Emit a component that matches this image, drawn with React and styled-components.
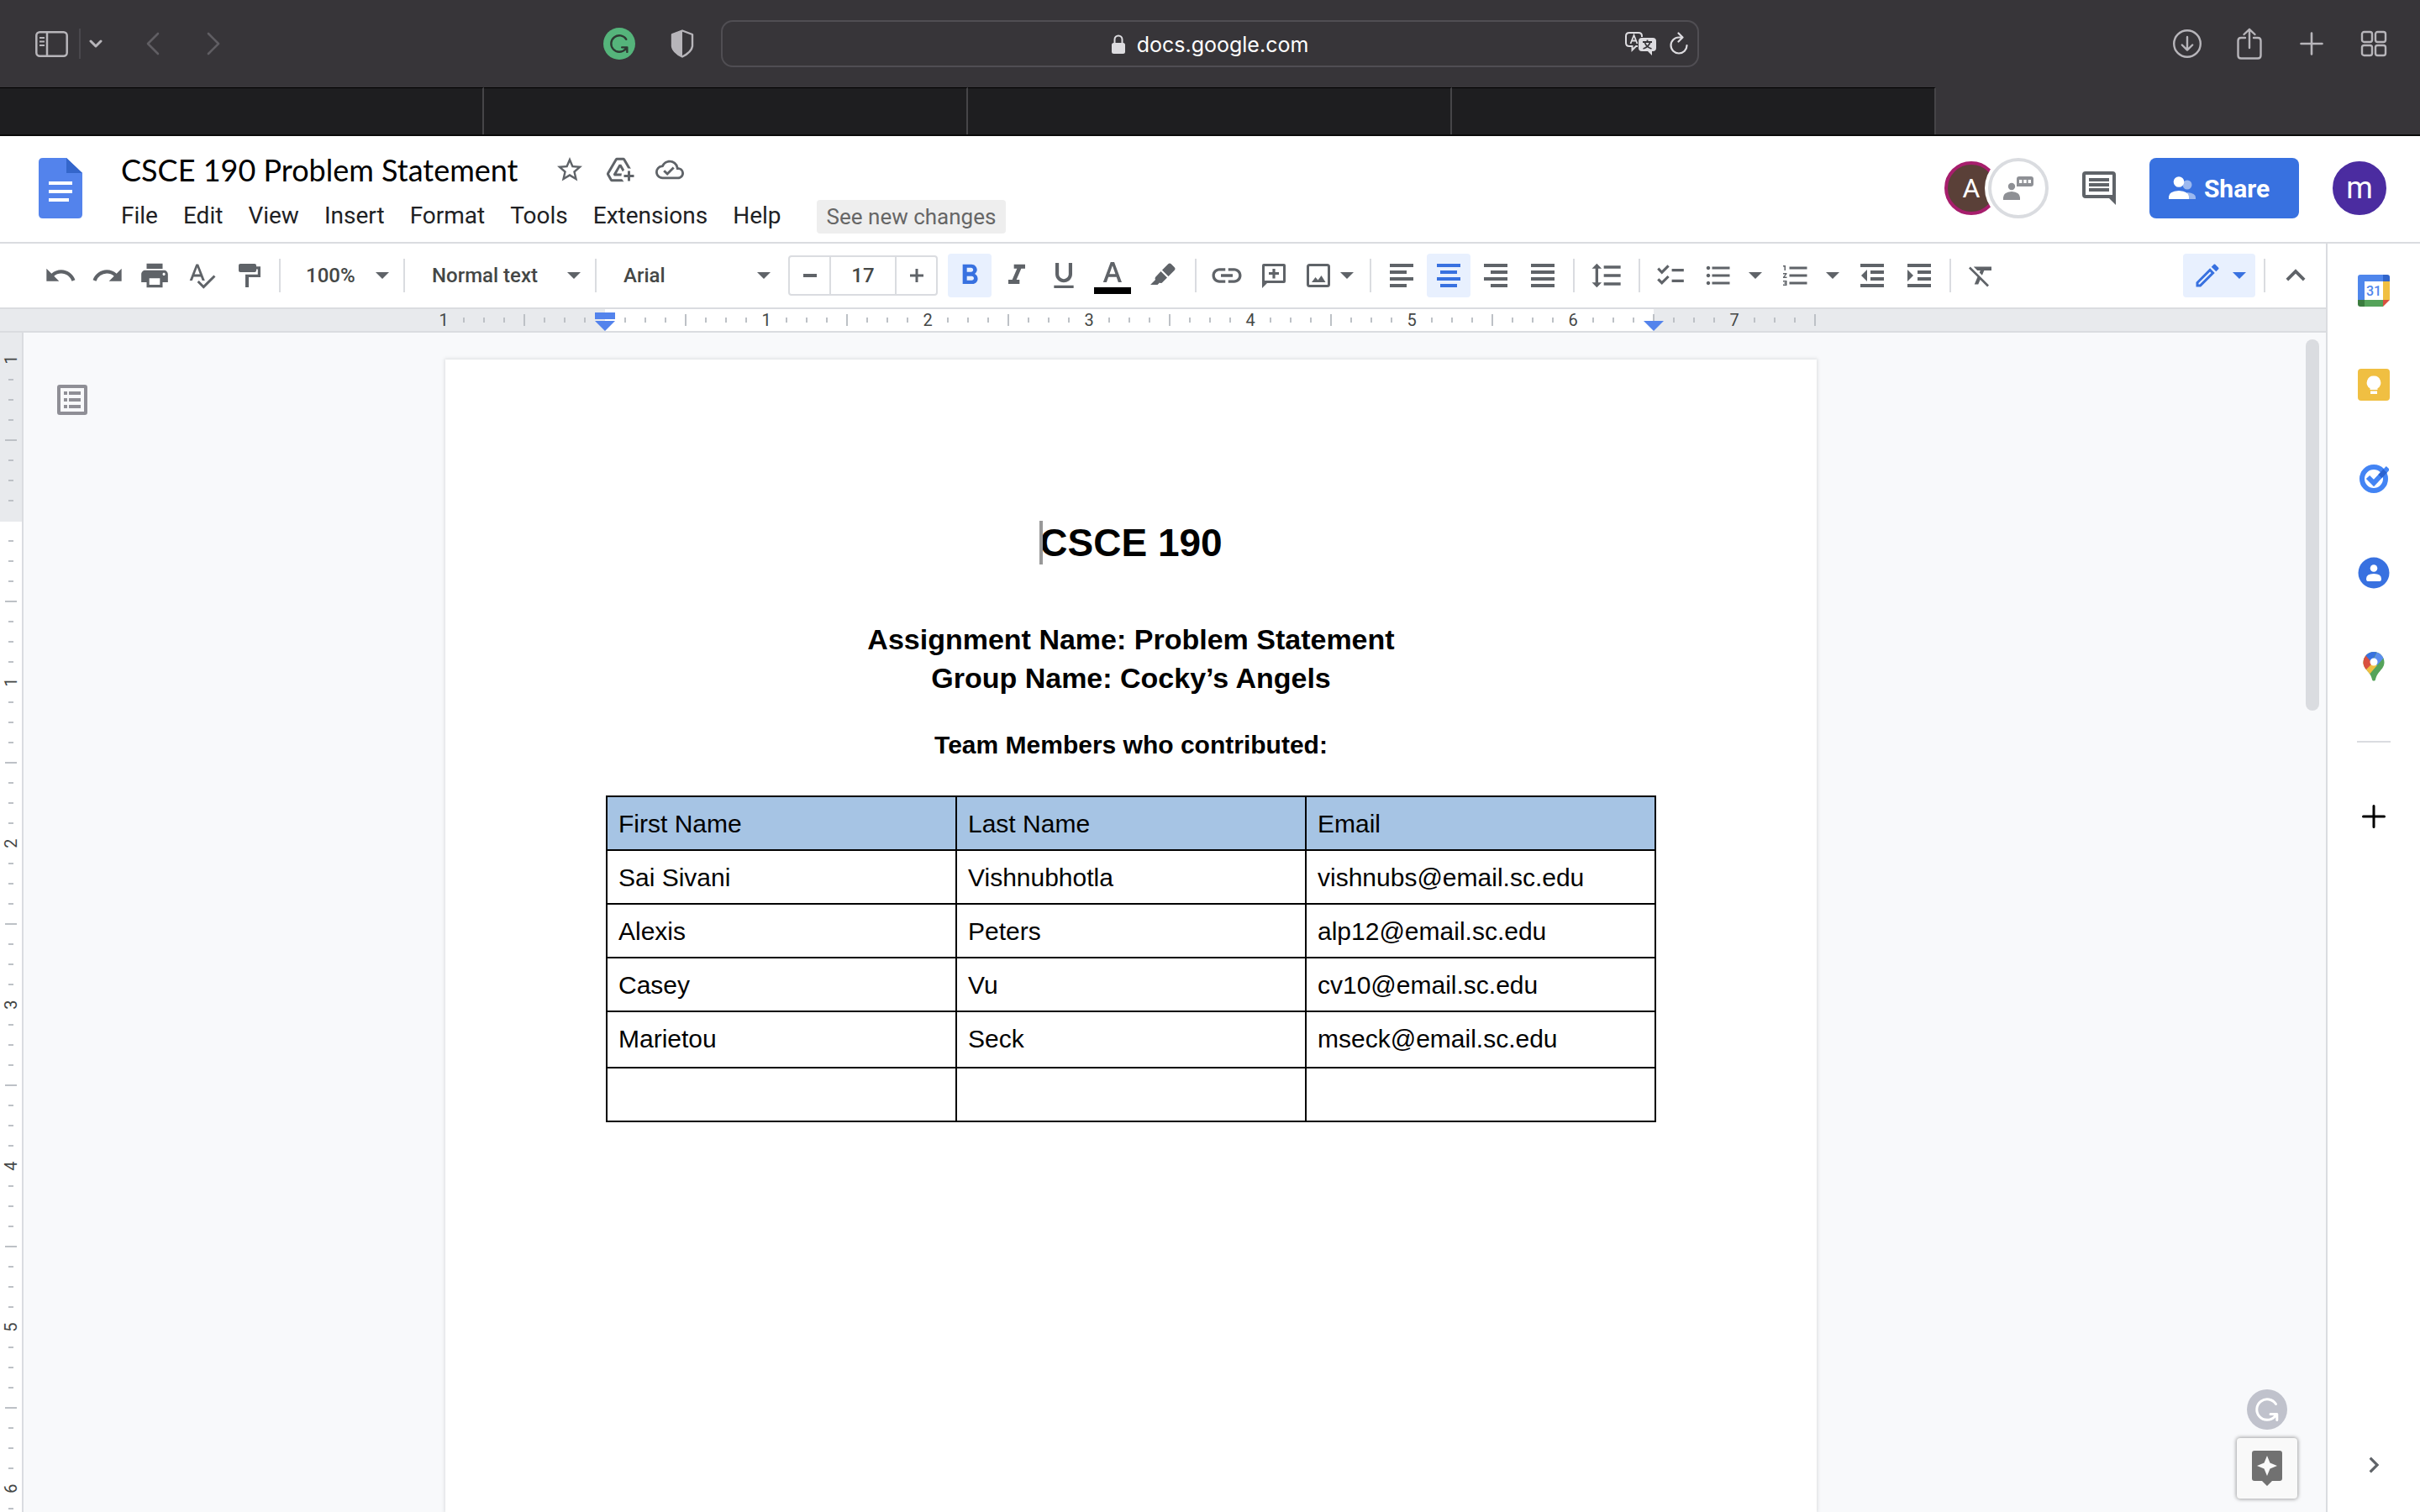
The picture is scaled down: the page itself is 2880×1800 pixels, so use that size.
import React from "react";
import styled, { createGlobalStyle, css } from "styled-components";
import {
  MdUndo, MdRedo, MdPrint, MdSpellcheck, MdFormatBold, MdFormatItalic,
  MdFormatUnderlined, MdLink, MdFormatLineSpacing, MdChecklist,
  MdFormatListBulleted, MdFormatListNumbered, MdFormatClear, MdOutlineEdit,
  MdKeyboardArrowUp, MdStarBorder, MdAddToDrive, MdOutlineCloudDone,
  MdChevronRight,
} from "react-icons/md";

const ui = '"Roboto", "Liberation Sans", sans-serif';
const doc = '"Liberation Sans", Arial, sans-serif';
const line = "#dadce0";
const ink = "#5f6368";

const GlobalStyle = createGlobalStyle`
  *, *::before, *::after { box-sizing: border-box; }
  body { margin: 0; background: #fff; font-family: ${ui}; overflow: hidden; }
  button, input, select { font: inherit; color: inherit; margin: 0; }
  button { padding: 0; border: 0; background: none; }
  svg { display: block; flex: none; }
`;

const Screen = styled.div`
  height: 100vh;
  display: flex;
  flex-direction: column;
`;

/* ---------- browser chrome ---------- */

const BrowserBar = styled.div`
  flex: none;
  height: 104px;
  padding: 0 36px;
  background: #373539;
  color: #b7b5ba;
  display: grid;
  grid-template-columns: 1fr minmax(0, 1164px) 1fr;
  align-items: start;
`;

const BarGroup = styled.div`
  height: 104px;
  display: flex;
  align-items: center;
  gap: ${(p) => p.$gap}px;
  padding: 0 ${(p) => p.$end || 0}px 0 ${(p) => p.$start || 0}px;
`;

const BarSide = styled.div`
  display: flex;
  justify-content: ${(p) => (p.$end ? "flex-end" : "space-between")};
`;

const BarButton = styled.button`
  height: 40px;
  width: ${(p) => p.$w || 38}px;
  display: flex;
  align-items: center;
  justify-content: center;
  color: ${(p) => (p.$dim ? "#605e63" : "inherit")};
`;

const BarRule = styled.span`
  width: 2px;
  height: 36px;
  background: #4a484d;
`;

const AddressBox = styled.div`
  height: 56px;
  margin-top: 24px;
  padding: 0 10px;
  border: 2px solid #504e53;
  border-radius: 14px;
  display: grid;
  grid-template-columns: 1fr auto 1fr;
  align-items: center;
  color: #fff;
`;

const Address = styled.a`
  grid-column: 2;
  display: flex;
  align-items: center;
  gap: 14px;
  padding-top: 2px;
  font: 400 25px/32px "Inter", ${ui};
  color: #fff;
  text-decoration: none;
`;

const AddressTools = styled.div`
  display: flex;
  justify-content: flex-end;
  gap: 14px;
  color: #dddce0;
`;

const TabStrip = styled.div`
  flex: none;
  display: flex;
  height: 58px;
  border-bottom: 2px solid #0a0a0a;
`;

const BrowserTab = styled.button`
  flex: 1;
  border-right: 2px solid #464548;
  border-top: 1px solid #000;
  background: #1e1e20;
  ${(p) => p.$active && css`
    background: #373539;
    border-color: #373539;
  `}
`;

/* ---------- document header ---------- */

const Header = styled.header`
  flex: none;
  height: 128px;
  padding: 0 40px 2px 46px;
  border-bottom: 2px solid ${line};
  display: flex;
  align-items: center;
`;

const TitleBlock = styled.div`
  margin-left: 32px;
  display: flex;
  flex-direction: column;
  gap: 12px;
  padding-top: 8px;
  flex: 1;
`;

const TitleRow = styled.div`
  display: flex;
  align-items: center;
  gap: 24px;
  height: 48px;
`;

const TitleInput = styled.input`
  width: 506px;
  height: 48px;
  padding: 0 0 0 14px;
  border: 0;
  background: none;
  outline: none;
  font: 400 36px/48px "Lato", ${ui};
  color: #000;
`;

const PlainButton = styled.button`
  display: flex;
  color: ${ink};
`;

const MenuRow = styled.nav`
  display: flex;
  gap: 2px;
  height: 40px;
`;

const MenuItem = styled.button`
  padding: 0 14px 2px;
  font-size: 28px;
  line-height: 38px;
  color: #202124;
`;

const ChangesButton = styled.button`
  margin-left: 26px;
  padding: 0 12px;
  border-radius: 4px;
  background: #eee;
  color: #666;
  font-size: 26px;
  line-height: 40px;
`;

const HeaderActions = styled.div`
  display: flex;
  align-items: center;
  gap: 40px;
`;

const People = styled.div`
  display: flex;
  align-items: center;
`;

const Avatar = styled.button`
  width: 64px;
  height: 64px;
  border-radius: 50%;
  border: 4px solid ${(p) => p.$ring};
  background: ${(p) => p.$fill};
  color: #fff;
  font-size: ${(p) => p.$size}px;
  line-height: 40px;
`;

const ChatButton = styled.button`
  width: 72px;
  height: 72px;
  margin-left: -12px;
  border-radius: 50%;
  border: 4px solid ${line};
  background: #fff;
  box-shadow: 0 0 0 4px #fff;
  display: grid;
  place-items: center;
`;

const ShareButton = styled.button`
  height: 72px;
  width: 178px;
  padding-right: 12px;
  border-radius: 8px;
  background: #3871e0;
  color: #fff;
  font-size: 30px;
  font-weight: 700;
  display: flex;
  align-items: center;
  justify-content: center;
  gap: 10px;
`;

/* ---------- workspace ---------- */

const Workspace = styled.div`
  flex: 1;
  min-height: 0;
  display: flex;
`;

const Editor = styled.main`
  flex: 1;
  min-width: 0;
  display: flex;
  flex-direction: column;
`;

const Toolbar = styled.div`
  flex: none;
  height: 78px;
  padding: 0 10px 0 46px;
  border-bottom: 2px solid ${line};
  display: flex;
  align-items: center;
  gap: 4px;
  color: ${ink};
`;

const ToolButton = styled.button`
  flex: none;
  width: ${(p) => p.$w || 52}px;
  height: 52px;
  border-radius: 4px;
  display: flex;
  align-items: center;
  justify-content: center;
  gap: ${(p) => p.$gap || 0}px;
  ${(p) => p.$on && css`
    background: #e8f0fe;
    color: #3871e0;
  `}
`;

const Divider = styled.span`
  flex: none;
  width: 2px;
  height: 40px;
  margin: 0 6px;
  background: ${line};
`;

const Spacer = styled.span`
  flex: 1;
`;

const Picker = styled.label`
  flex: none;
  position: relative;
  width: ${(p) => p.$w}px;
  height: 52px;
  display: flex;
  align-items: center;

  select {
    appearance: none;
    width: 100%;
    height: 52px;
    padding: 0 36px 0 ${(p) => p.$pad}px;
    border: 0;
    background: none;
    font-size: 24px;
    font-weight: 500;
    color: #444746;
  }

  svg {
    position: absolute;
    right: 7px;
    pointer-events: none;
  }
`;

const SizeBox = styled.div`
  flex: none;
  display: flex;
  width: 178px;
  height: 48px;
  margin: 0 8px 0 10px;
  border: 2px solid ${line};
  border-radius: 4px;

  button {
    width: 47px;
    display: grid;
    place-items: center;
  }

  input {
    flex: 1;
    min-width: 0;
    border: solid ${line};
    border-width: 0 2px;
    text-align: center;
    font-size: 24px;
    font-weight: 500;
    color: #444746;
    outline: none;
  }
`;

const RulerBar = styled.div`
  flex: none;
  height: 28px;
  padding: 0 108px 0 28px;
  border-bottom: 2px solid ${line};
  background: #e8eaed;
  display: flex;
  justify-content: center;
`;

const RulerStrip = styled.div`
  position: relative;
  flex: none;
  display: flex;
  background: linear-gradient(90deg, #e8eaed 204px, #fff 204px, #fff 1452px, #e8eaed 1452px);
`;

const SideRuler = styled.div`
  flex: none;
  width: 28px;
  padding-top: 20px;
  border-right: 2px solid ${line};
  background: linear-gradient(#e8eaed 225px, #fff 225px);
  overflow: hidden;
`;

const SideRulerStrip = styled.div`
  display: flex;
  flex-direction: column;
`;

const Cell = styled.span`
  flex: none;
  width: ${(p) => (p.$side ? 26 : 24)}px;
  height: ${(p) => (p.$side ? 24 : 26)}px;
  display: grid;
  place-items: center;
  font-size: 20px;
  line-height: 24px;
  color: #444746;
`;

const Mark = styled.i`
  background: #bdc1c6;
  width: ${(p) => (p.$side ? p.$len : 2)}px;
  height: ${(p) => (p.$side ? 2 : p.$len)}px;
`;

const Turned = styled.span`
  transform: rotate(-90deg);
`;

const Indent = styled.svg`
  position: absolute;
  top: 4px;
  left: ${(p) => p.$at}px;
`;

const Canvas = styled.div`
  flex: 1;
  min-height: 0;
  display: flex;
  background: #f8f9fb;
  position: relative;
`;

const OutlineColumn = styled.div`
  flex: none;
  width: 116px;
  padding: 62px 0 0 40px;
`;

const PageArea = styled.div`
  flex: 1;
  min-width: 0;
  display: flex;
  justify-content: center;
  padding: 32px 196px 0 0;
  overflow: hidden;
`;

const Page = styled.article`
  flex: none;
  width: 1632px;
  padding: 192px;
  background: #fff;
  box-shadow: 0 0 4px 1px rgba(60, 64, 67, 0.15);
  font-family: ${doc};
  color: #000;
  text-align: center;
`;

const DocTitle = styled.h1`
  margin: 0 0 66px;
  font-size: 46px;
  line-height: 52px;
`;

const Caret = styled.span`
  position: absolute;
  width: 4px;
  height: 52px;
  background: #999;
`;

const DocLine = styled.h2`
  margin: 0;
  font-size: 34px;
  line-height: 46px;
`;

const DocCaption = styled.h3`
  margin: 37px 0 40px;
  font-size: 30px;
  line-height: 40px;
`;

const Members = styled.table`
  width: calc(100% + 2px);
  margin-left: -1px;
  table-layout: fixed;
  border-collapse: collapse;
  font-size: 30px;
  line-height: 40px;
  text-align: left;

  th, td {
    height: 64px;
    padding: 12px 12px 10px 13px;
    border: 2px solid #000;
    font-weight: 400;
    vertical-align: top;
  }

  th { background: #a6c4e4; }
`;

const MemberRow = styled.tr`
  height: ${(p) => (p.$last ? 67 : 64)}px;
`;

const ScrollTrack = styled.div`
  flex: none;
  width: 24px;
  padding-top: 8px;
`;

const ScrollThumb = styled.div`
  width: 16px;
  height: 442px;
  border-radius: 8px;
  background: ${line};
`;

const Floating = styled.div`
  position: absolute;
  right: 34px;
  bottom: 16px;
  display: flex;
  flex-direction: column;
  align-items: center;
  gap: 10px;
`;

const ExploreButton = styled.button`
  width: 72px;
  height: 72px;
  border-radius: 4px;
  background: #f9f9f9;
  box-shadow: 0 0 4px 1px rgba(0, 0, 0, 0.35);
  display: grid;
  place-items: center;
`;

const SidePanel = styled.aside`
  flex: none;
  width: 112px;
  padding: 16px 0;
  border-left: 2px solid ${line};
  background: #fff;
  display: flex;
  flex-direction: column;
  align-items: center;
  gap: 32px;
`;

const PanelButton = styled.button`
  width: 80px;
  height: 80px;
  display: grid;
  place-items: center;
  color: ${(p) => p.$color || ink};
`;

const PanelRule = styled.span`
  width: 40px;
  height: 2px;
  margin: 16px 0;
  background: ${line};
`;

/* ---------- drawings ---------- */

const Drop = () => (
  <svg width="16" height="8" viewBox="0 0 16 8"><path fill="currentColor" d="M0 0h16L8 8z" /></svg>
);

const Solid = ({ d }) => (
  <svg width="16" height="16" viewBox="0 0 16 16"><path fill="currentColor" d={d} /></svg>
);

const Lines = ({ rows }) => (
  <svg width="28" height="28" viewBox="0 0 28 28" fill="currentColor">
    {rows.map(([x, w], i) => <rect key={i} x={x} y={i * 8} width={w} height="4" />)}
  </svg>
);

const IndentIcon = ({ d }) => (
  <svg width="28" height="28" viewBox="0 0 28 28" fill="currentColor">
    <path d="M0 0h28v4H0zM12 8h16v4H12zM12 16h16v4H12zM0 24h28v4H0z" />
    <path d={d} />
  </svg>
);

const PaintRoller = () => (
  <svg width="36" height="36" viewBox="0 0 18 18" fill="currentColor">
    <rect x="3" y="2" width="10.5" height="5" rx="1" />
    <path d="M13 3.6h3V10H9v6H7V8.4h7.4V5.2H13z" />
  </svg>
);

const TextColor = () => (
  <svg width="44" height="44" viewBox="0 0 44 44">
    <path fill="#5f6368" transform="translate(1.5 1) scale(1.7)" d="M5.49 17h2.42l1.27-3.58h5.65L16.09 17h2.42L13.25 3h-2.5L5.49 17zm4.42-5.61 2.03-5.79h.12l2.03 5.79H9.91z" />
    <path fill="#000" d="M0 36h44v8H0z" />
  </svg>
);

const Highlighter = () => (
  <svg width="32" height="36" viewBox="0 0 32 36" fill="currentColor">
    <path d="M22 4.500q2-2 4 0l3.500 3.500q2 2 0 4l-7 7-7.500-7.500zM13.500 13l7.500 7.500-6 6q-1.500 1-3 0l-2.500 2.500H1l6-6q-1-1.500 0-3z" />
  </svg>
);

const AddComment = () => (
  <svg width="36" height="36" viewBox="0 0 18 18" fill="currentColor">
    <path d="M3 2h12q1 0 1 1v9.500q0 1-1 1H5L2 16.500V3q0-1 1-1zm.5 1.500V12h11V3.500zM8.200 5h1.600v2H12v1.500H9.800v2.200H8.200V8.500H6V7h2.200z" fillRule="evenodd" />
  </svg>
);

const ImageIcon = () => (
  <svg width="28" height="28" viewBox="0 0 28 28">
    <rect x="1.500" y="1.500" width="25" height="25" rx="2" fill="none" stroke="currentColor" strokeWidth="3" />
    <path fill="currentColor" d="M6 22l4.500-6 3 3.600L17.500 14l5 8z" />
  </svg>
);

const DocsLogo = () => (
  <svg width="52" height="72" viewBox="0 0 52 72">
    <path fill="#5383ec" d="M5 0h28l19 18v49q0 5-5 5H5q-5 0-5-5V5q0-5 5-5z" />
    <path fill="#3466cb" d="M33 0l19 18H33z" />
    <path fill="#fff" d="M12 28h28v4H12zM12 38h28v4H12zM12 48h24v4H12z" />
  </svg>
);

const GrammarlyMark = ({ size, fill, stroke }) => (
  <svg width={size} height={size} viewBox="0 0 48 48">
    <circle cx="24" cy="24" r="24" fill={fill} />
    <path fill="none" stroke={stroke} strokeWidth="3" strokeLinecap="round" strokeLinejoin="round" d="M34.500 17.500A12.300 12.300 0 1 0 33 32.500M28 29.500h7.800v7M35 30l-2.500 3" />
  </svg>
);

const SidebarIcon = () => (
  <svg width="39" height="31" viewBox="0 0 39 31" fill="none" stroke="currentColor" strokeWidth="2.500">
    <rect x="1.300" y="1.300" width="36.400" height="28.400" rx="4" />
    <path d="M14 1v29" />
    <path strokeWidth="1.800" d="M5 8h6M5 12.500h6M5 17h6" />
  </svg>
);

const ShieldIcon = () => (
  <svg width="28" height="34" viewBox="0 0 28 34">
    <path fill="none" stroke="currentColor" strokeWidth="2.400" strokeLinejoin="round" d="M14 1.500l12 4.500v14q-1 7-12 12.500Q3 27 2 20V6z" />
    <path fill="currentColor" d="M14 1v32Q2 27 1 20V6z" />
  </svg>
);

const LockIcon = () => (
  <svg width="16" height="24" viewBox="0 0 16 24">
    <rect y="10" width="16" height="13" rx="2.500" fill="#dddce0" />
    <path fill="none" stroke="#dddce0" strokeWidth="2" d="M3.500 11V6a4.500 4.500 0 0 1 9 0v5" />
  </svg>
);

const TranslateIcon = () => (
  <svg width="38" height="28" viewBox="0 0 38 28">
    <path fill="none" stroke="currentColor" strokeWidth="2" d="M15 17h-2l-4.500 4.500V17H5q-4 0-4-4V5q0-4 4-4h11q4 0 4 4v1" />
    <path fill="none" stroke="currentColor" strokeWidth="1.800" d="M6.500 14l4-10 4 10M8 10.500h5" />
    <path fill="currentColor" d="M20 7h13q4 0 4 4v8q0 4-4 4h-1v5l-5-5h-7q-4 0-4-4v-8q0-4 4-4z" />
    <path fill="none" stroke="#373539" strokeWidth="1.800" d="M21 12h11M26.500 9.500V12M30 12q-2 6-8.500 8M23.500 13q2 5 8 7" />
  </svg>
);

const ReloadIcon = () => (
  <svg width="24" height="28" viewBox="0 0 24 28" fill="none" stroke="currentColor" strokeWidth="2.200" strokeLinecap="round" strokeLinejoin="round">
    <path d="M16 6.500H12A9.500 9.500 0 1 0 21.500 16M11.500 1.500l5 5-5 5" />
  </svg>
);

const DownloadIcon = () => (
  <svg width="36" height="36" viewBox="0 0 36 36" fill="none" stroke="currentColor" strokeWidth="2.400" strokeLinecap="round" strokeLinejoin="round">
    <circle cx="18" cy="18" r="15.800" />
    <path d="M18 10v15.500M11.800 19.500l6.200 6.200 6.200-6.200" />
  </svg>
);

const ShareUpIcon = () => (
  <svg width="30" height="38" viewBox="0 0 30 38" fill="none" stroke="currentColor" strokeWidth="2.400" strokeLinecap="round" strokeLinejoin="round">
    <path d="M10 12H5q-3.500 0-3.500 3.500v17.500q0 3.500 3.500 3.500h20q3.500 0 3.500-3.500V15.500q0-3.500-3.500-3.500h-5M15 24V2M8.500 8L15 1.800 21.500 8" />
  </svg>
);

const GridIcon = () => (
  <svg width="32" height="32" viewBox="0 0 32 32" fill="none" stroke="currentColor" strokeWidth="2.400">
    {[[2, 2], [18, 2], [2, 18], [18, 18]].map(([x, y]) => (
      <rect key={`${x}-${y}`} x={x} y={y} width="12" height="12" rx="2.500" />
    ))}
  </svg>
);

const Stroke = ({ w, h, d, sw }) => (
  <svg width={w} height={h} viewBox={`0 0 ${w} ${h}`} fill="none" stroke="currentColor" strokeWidth={sw} strokeLinecap="round" strokeLinejoin="round">
    <path d={d} />
  </svg>
);

const ChatPeople = () => (
  <svg width="36" height="28" viewBox="0 0 36 28" fill="#8e9095">
    <path d="M19 0h14q3 0 3 3v6q0 3-3 3H16V3q0-3 3-3z" />
    <path fill="#fff" d="M19 4h3.400v4H19zM24.300 4h3.400v4h-3.400zM29.600 4H33v4h-3.400z" />
    <circle cx="10" cy="12" r="4.200" />
    <path d="M0 28v-3q0-6 10-7 10 1 10 7v3z" />
  </svg>
);

const CommentIcon = () => (
  <svg width="40" height="40" viewBox="0 0 40 40" fill={ink}>
    <path fillRule="evenodd" d="M4 0h32q4 0 4 4v36l-8-8H4q-4 0-4-4V4q0-4 4-4zm0 4v24h32V4z" />
    <path d="M8 8h24v4H8zM8 14h24v4H8zM8 20h24v4H8z" />
  </svg>
);

const SharePeople = () => (
  <svg width="32" height="28" viewBox="0 0 32 28" fill="#fff">
    <g opacity="0.5">
      <circle cx="22" cy="10" r="5.500" />
      <path d="M22 19q10 1 10 6v2H22z" />
    </g>
    <circle cx="12" cy="6.500" r="6.300" />
    <path d="M0 27v-3q0-6 12-7 12 1 12 7v3z" />
  </svg>
);

const OutlineIcon = () => (
  <svg width="36" height="36" viewBox="0 0 36 36" fill="#8f8f96">
    <path fillRule="evenodd" d="M3 0h30q3 0 3 3v30q0 3-3 3H3q-3 0-3-3V3q0-3 3-3zm1 4v28h28V4z" />
    <path d="M8 8h4v4H8zM14 8h14v4H14zM8 16h4v4H8zM14 16h14v4H14zM8 24h4v4H8zM14 24h14v4H14z" />
  </svg>
);

const ExploreIcon = () => (
  <svg width="36" height="42" viewBox="0 0 36 42">
    <path fill="#717171" d="M3 0h30q3 0 3 3v30q0 3-3 3h-9l-6 6-6-6H3q-3 0-3-3V3q0-3 3-3z" />
    <path fill="#f9f9f9" d="M18 6l3.500 8.500L30 18l-8.500 3.500L18 30l-3.500-8.500L6 18l8.500-3.500z" />
  </svg>
);

const CalendarIcon = () => (
  <svg width="38" height="38" viewBox="0 0 38 38">
    <path fill="#4f86ec" d="M3 0h27v8H8v22H0V3q0-3 3-3z" />
    <path fill="#3165cb" d="M30 0h5q3 0 3 3v5h-8z" />
    <path fill="#f0bf42" d="M30 8h8v22h-8z" />
    <path fill="#55a35a" d="M8 30h22v8H8z" />
    <path fill="#3b7c3f" d="M0 30h8v8H3q-3 0-3-3z" />
    <path fill="#d9503f" d="M30 30h8l-8 8z" />
    <path fill="#fff" d="M8 8h22v22H8z" />
    <text x="19" y="25" textAnchor="middle" fontFamily="Roboto, sans-serif" fontSize="16" fontWeight="500" fill="#4f86ec">31</text>
  </svg>
);

const KeepIcon = () => (
  <svg width="38" height="38" viewBox="0 0 38 38">
    <rect width="38" height="38" rx="4" fill="#f0bf42" />
    <path fill="#fff" d="M19 8.500a8 8 0 0 1 4.500 14.800V25h-9v-1.700A8 8 0 0 1 19 8.500zM15 26.500h8V30h-8z" />
  </svg>
);

const TasksIcon = () => (
  <svg width="36" height="36" viewBox="0 0 36 36" fill="none">
    <circle cx="18" cy="18" r="14" stroke="#4384f4" strokeWidth="6" />
    <path stroke="#4384f4" strokeWidth="6" d="M11 16l7 7L35 5" />
    <path stroke="#2b62cf" strokeWidth="6" d="M25.500 15l6-6.400" />
  </svg>
);

const ContactsIcon = () => (
  <svg width="38" height="38" viewBox="0 0 38 38">
    <circle cx="19" cy="19" r="18.500" fill="#3871e0" />
    <circle cx="19" cy="13.500" r="4.300" fill="#fff" />
    <path fill="#fff" d="M10 26q0-6 9-6t9 6q0 3-2 3H12q-2 0-2-3z" />
  </svg>
);

const MapsIcon = () => (
  <svg width="26" height="36" viewBox="0 0 26 36">
    <defs>
      <clipPath id="pin">
        <path d="M13 0a12.500 12.500 0 0 1 12.500 12.500c0 6-4 8.500-7.500 13.500-2 3-2.500 5-3 7-.4 2-3.600 2-4 0-.5-2-1-4-3-7C4.500 21 .5 18.500.5 12.500A12.500 12.500 0 0 1 13 0z" />
      </clipPath>
    </defs>
    <g clipPath="url(#pin)">
      <path fill="#55a35a" d="M0 0h26v36H0z" />
      <path fill="#f0bf42" d="M0 12l12-2 5 6L5 30l-5-4z" />
      <path fill="#d9503f" d="M0 3h5l8 9-10 10-3-2z" />
      <path fill="#3871e0" d="M3 4l8-6h7l-8 14z" />
      <path fill="#5b8def" d="M18 -2l8 8-9 10-5-6z" />
    </g>
    <circle cx="13" cy="12" r="4.500" fill="#fff" />
  </svg>
);

/* ---------- data ---------- */

const menus = ["File", "Edit", "View", "Insert", "Format", "Tools", "Extensions", "Help"];

const members = [
  ["Sai Sivani", "Vishnubhotla", "vishnubs@email.sc.edu"],
  ["Alexis", "Peters", "alp12@email.sc.edu"],
  ["Casey", "Vu", "cv10@email.sc.edu"],
  ["Marietou", "Seck", "mseck@email.sc.edu"],
  ["", "", ""],
];

const eighths = (from, to) => Array.from({ length: to - from + 1 }, (_, i) => from + i);

function RulerCell({ n, side }) {
  if (n === 0) return <Cell $side={side} />;
  if (n % 8 === 0) {
    const label = Math.abs(n / 8);
    return <Cell $side={side}>{side ? <Turned>{label}</Turned> : label}</Cell>;
  }
  return <Cell $side={side}><Mark $side={side} $len={n % 4 === 0 ? 14 : 6} /></Cell>;
}

function Pick({ label, value, width, pad = 22 }) {
  return (
    <Picker $w={width} $pad={pad}>
      <select aria-label={label} defaultValue={value}><option>{value}</option></select>
      <Drop />
    </Picker>
  );
}

export default function App() {
  return (
    <Screen>
      <GlobalStyle />

      <BrowserBar>
        <BarSide>
          <BarGroup $gap={8}>
            <BarButton $w={50} aria-label="Sidebar"><SidebarIcon /></BarButton>
            <BarRule />
            <BarButton $w={20} aria-label="Tab groups"><Stroke w={16} h={10} sw={3} d="M2 2l6 6 6-6" /></BarButton>
            <BarGroup $gap={28} $start={28}>
              <BarButton $w={44} $dim aria-label="Back"><Stroke w={16} h={28} sw={2.6} d="M14 2L2 14l12 12" /></BarButton>
              <BarButton $w={44} $dim aria-label="Forward"><Stroke w={16} h={28} sw={2.6} d="M2 2l12 12L2 26" /></BarButton>
            </BarGroup>
          </BarGroup>
          <BarGroup $gap={42} $end={32}>
            <BarButton aria-label="Grammarly"><GrammarlyMark size={38} fill="#55b47b" stroke="#2d3a33" /></BarButton>
            <BarButton $w={28} aria-label="Privacy report"><ShieldIcon /></BarButton>
          </BarGroup>
        </BarSide>
        <AddressBox>
          <Address href="#"><LockIcon />docs.google.com</Address>
          <AddressTools>
            <BarButton aria-label="Translate"><TranslateIcon /></BarButton>
            <BarButton $w={24} aria-label="Reload"><ReloadIcon /></BarButton>
          </AddressTools>
        </AddressBox>
        <BarSide $end>
          <BarGroup $gap={36}>
            <BarButton aria-label="Downloads"><DownloadIcon /></BarButton>
            <BarButton aria-label="Share page"><ShareUpIcon /></BarButton>
            <BarButton aria-label="New tab"><Stroke w={28} h={28} sw={2.6} d="M14 1.500v25M1.500 14h25" /></BarButton>
            <BarButton aria-label="Tab overview"><GridIcon /></BarButton>
          </BarGroup>
        </BarSide>
      </BrowserBar>
      <TabStrip>
        {[0, 1, 2, 3, 4].map((n) => <BrowserTab key={n} $active={n === 4} aria-label={`Tab ${n + 1}`} />)}
      </TabStrip>

      <Header>
        <DocsLogo />
        <TitleBlock>
          <TitleRow>
            <TitleInput aria-label="Document title" defaultValue="CSCE 190 Problem Statement" />
            <PlainButton aria-label="Star"><MdStarBorder size={36} /></PlainButton>
            <PlainButton aria-label="Add to Drive"><MdAddToDrive size={36} /></PlainButton>
            <PlainButton aria-label="Saved"><MdOutlineCloudDone size={34} /></PlainButton>
          </TitleRow>
          <MenuRow>
            {menus.map((m) => <MenuItem key={m}>{m}</MenuItem>)}
            <ChangesButton>See new changes</ChangesButton>
          </MenuRow>
        </TitleBlock>
        <HeaderActions>
          <People>
            <Avatar $ring="#a71e6d" $fill="#5a4038" $size={32}>A</Avatar>
            <ChatButton aria-label="Show chat"><ChatPeople /></ChatButton>
          </People>
          <PlainButton aria-label="Comments"><CommentIcon /></PlainButton>
          <ShareButton><SharePeople />Share</ShareButton>
          <Avatar $ring="#4b2ca0" $fill="#4b2ca0" $size={36}>m</Avatar>
        </HeaderActions>
      </Header>

      <Workspace>
        <Editor>
          <Toolbar>
            <ToolButton aria-label="Undo"><MdUndo size={40} /></ToolButton>
            <ToolButton aria-label="Redo"><MdRedo size={40} /></ToolButton>
            <ToolButton aria-label="Print"><MdPrint size={38} /></ToolButton>
            <ToolButton aria-label="Spelling"><MdSpellcheck size={36} /></ToolButton>
            <ToolButton aria-label="Paint format"><PaintRoller /></ToolButton>
            <Divider />
            <Pick label="Zoom" value="100%" width={126} pad={20} />
            <Divider />
            <Pick label="Styles" value="Normal text" width={206} />
            <Divider />
            <Pick label="Font" value="Arial" width={204} />
            <SizeBox>
              <button aria-label="Decrease font size"><Solid d="M0 6h16v4H0z" /></button>
              <input aria-label="Font size" defaultValue="17" />
              <button aria-label="Increase font size"><Solid d="M0 6.500h6.500V0h3v6.500H16v3H9.500V16h-3V9.500H0z" /></button>
            </SizeBox>
            <ToolButton $on aria-label="Bold"><MdFormatBold size={40} /></ToolButton>
            <ToolButton aria-label="Italic"><MdFormatItalic size={40} /></ToolButton>
            <ToolButton aria-label="Underline"><MdFormatUnderlined size={40} /></ToolButton>
            <ToolButton $w={56} aria-label="Text color"><TextColor /></ToolButton>
            <ToolButton $w={56} aria-label="Highlight color"><Highlighter /></ToolButton>
            <Divider />
            <ToolButton aria-label="Insert link"><MdLink size={42} /></ToolButton>
            <ToolButton aria-label="Add comment"><AddComment /></ToolButton>
            <ToolButton $w={74} $gap={12} aria-label="Insert image"><ImageIcon /><Drop /></ToolButton>
            <Divider />
            <ToolButton aria-label="Left align"><Lines rows={[[0, 28], [0, 20], [0, 28], [0, 20]]} /></ToolButton>
            <ToolButton $on aria-label="Center align"><Lines rows={[[0, 28], [4, 20], [0, 28], [4, 20]]} /></ToolButton>
            <ToolButton aria-label="Right align"><Lines rows={[[0, 28], [8, 20], [0, 28], [8, 20]]} /></ToolButton>
            <ToolButton aria-label="Justify"><Lines rows={[[0, 28], [0, 28], [0, 28], [0, 28]]} /></ToolButton>
            <Divider />
            <ToolButton $w={56} aria-label="Line spacing"><MdFormatLineSpacing size={40} /></ToolButton>
            <Divider />
            <ToolButton aria-label="Checklist"><MdChecklist size={38} /></ToolButton>
            <ToolButton $w={88} $gap={18} aria-label="Bulleted list"><MdFormatListBulleted size={36} /><Drop /></ToolButton>
            <ToolButton $w={88} $gap={18} aria-label="Numbered list"><MdFormatListNumbered size={36} /><Drop /></ToolButton>
            <ToolButton aria-label="Decrease indent"><IndentIcon d="M8 7v14l-7-7z" /></ToolButton>
            <ToolButton aria-label="Increase indent"><IndentIcon d="M0 7v14l7-7z" /></ToolButton>
            <Divider />
            <ToolButton aria-label="Clear formatting"><MdFormatClear size={36} /></ToolButton>
            <Spacer />
            <ToolButton $on $w={86} $gap={12} aria-label="Editing mode"><MdOutlineEdit size={36} /><Drop /></ToolButton>
            <Divider />
            <ToolButton aria-label="Hide the menus"><MdKeyboardArrowUp size={46} /></ToolButton>
          </Toolbar>

          <RulerBar>
            <RulerStrip>
              {eighths(-8, 60).map((n) => <RulerCell key={n} n={n} />)}
              <Indent $at={192} width="24" height="22" viewBox="0 0 24 22" fill="#5383ec"><path d="M0 0h24v8H0zM0 10h24L12 22z" /></Indent>
              <Indent $at={1440} width="24" height="22" viewBox="0 0 24 22" fill="#5383ec"><path d="M0 10h24L12 22z" /></Indent>
            </RulerStrip>
          </RulerBar>

          <Canvas>
            <SideRuler>
              <SideRulerStrip>
                {eighths(-8, 55).map((n) => <RulerCell key={n} n={n} side />)}
              </SideRulerStrip>
            </SideRuler>
            <OutlineColumn>
              <PlainButton aria-label="Show document outline"><OutlineIcon /></PlainButton>
            </OutlineColumn>
            <PageArea>
              <Page>
                <DocTitle><Caret />CSCE 190</DocTitle>
                <DocLine>Assignment Name: Problem Statement</DocLine>
                <DocLine>Group Name: Cocky’s Angels</DocLine>
                <DocCaption>Team Members who contributed:</DocCaption>
                <Members>
                  <thead>
                    <MemberRow><th>First Name</th><th>Last Name</th><th>Email</th></MemberRow>
                  </thead>
                  <tbody>
                    {members.map((row, i) => (
                      <MemberRow key={i} $last={row[0] === "Marietou"}>
                        {row.map((v, j) => <td key={j}>{v}</td>)}
                      </MemberRow>
                    ))}
                  </tbody>
                </Members>
              </Page>
            </PageArea>
            <ScrollTrack><ScrollThumb /></ScrollTrack>
            <Floating>
              <PlainButton aria-label="Open Grammarly"><GrammarlyMark size={48} fill="#c0c2cc" stroke="#fff" /></PlainButton>
              <ExploreButton aria-label="Explore"><ExploreIcon /></ExploreButton>
            </Floating>
          </Canvas>
        </Editor>

        <SidePanel>
          <PanelButton aria-label="Calendar"><CalendarIcon /></PanelButton>
          <PanelButton aria-label="Keep"><KeepIcon /></PanelButton>
          <PanelButton aria-label="Tasks"><TasksIcon /></PanelButton>
          <PanelButton aria-label="Contacts"><ContactsIcon /></PanelButton>
          <PanelButton aria-label="Maps"><MapsIcon /></PanelButton>
          <PanelRule />
          <PanelButton $color="#000" aria-label="Get add-ons"><Stroke w={28} h={28} sw={3} d="M14 1.500v25M1.500 14h25" /></PanelButton>
          <Spacer />
          <PanelButton aria-label="Hide side panel"><MdChevronRight size={38} /></PanelButton>
        </SidePanel>
      </Workspace>
    </Screen>
  );
}
